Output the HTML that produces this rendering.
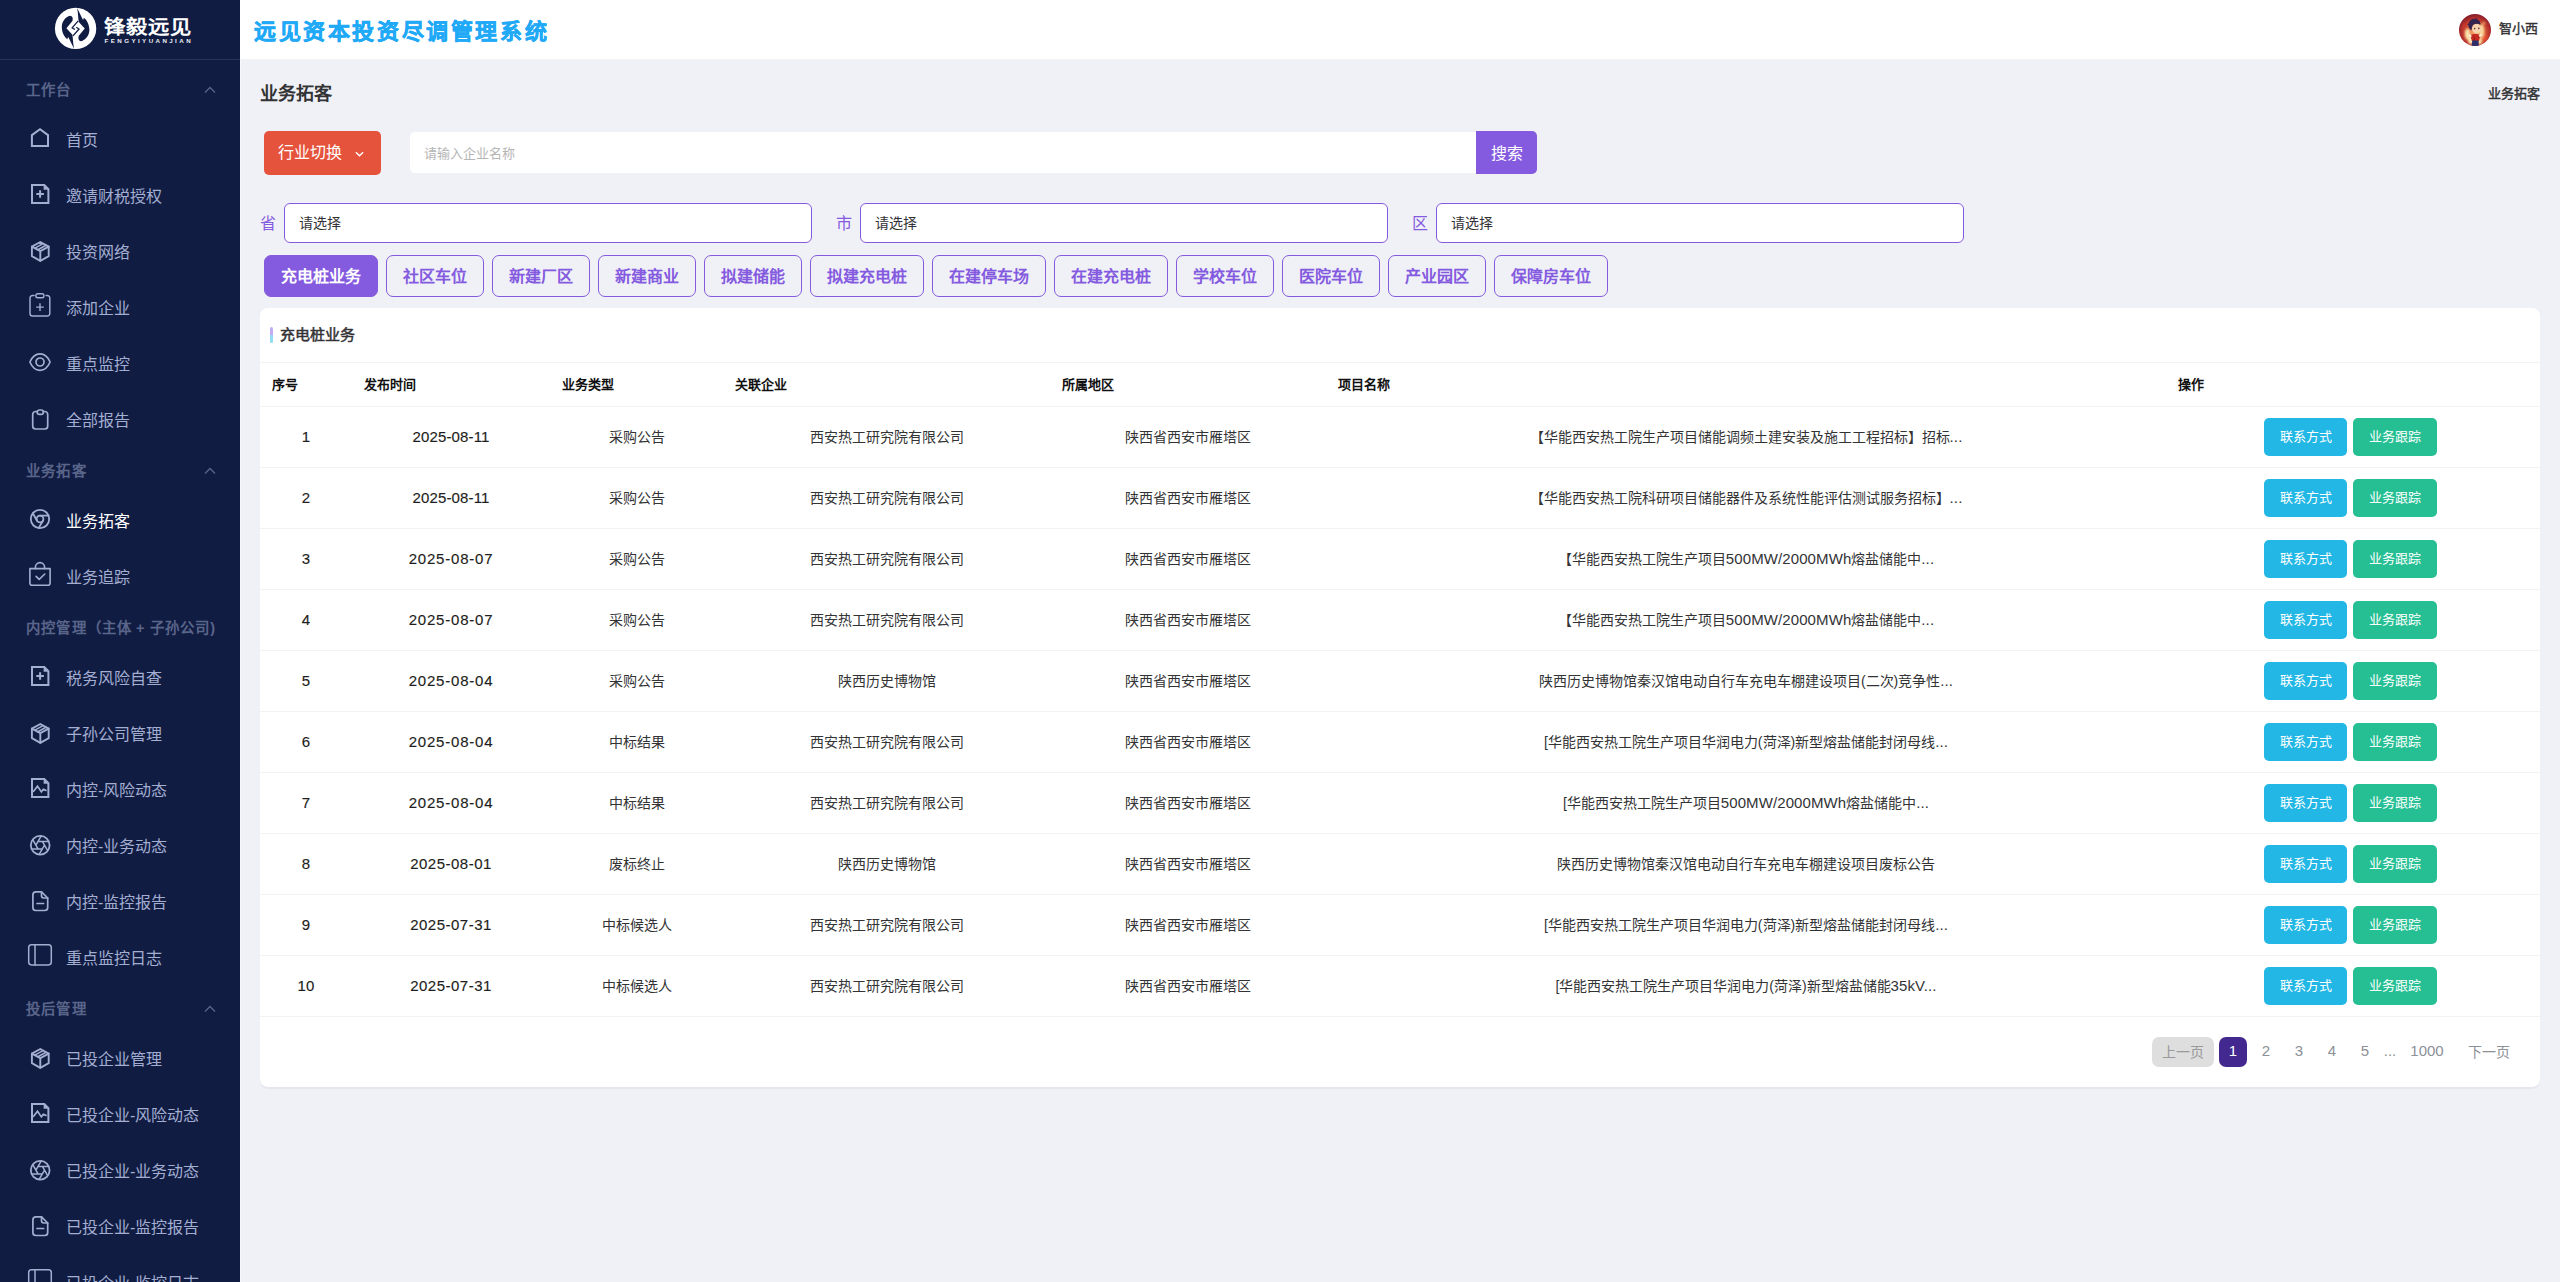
<!DOCTYPE html>
<html lang="zh-CN">
<head>
<meta charset="utf-8">
<title>业务拓客</title>
<style>

*{box-sizing:border-box;margin:0;padding:0}
html,body{width:2560px;height:1282px;overflow:hidden}
body{font-family:"Liberation Sans",sans-serif;background:#f0f1f7;color:#333335;font-size:14px;position:relative}
svg{display:block}

/* ---------- sidebar ---------- */
.sidebar{position:absolute;left:0;top:0;width:240px;height:1282px;background:#111c43;overflow:hidden}
.logo{height:60px;border-bottom:1px solid #293356;position:relative}
.logo svg{position:absolute;left:54px;top:7px}
.menu{padding-top:6px}
.cat{height:45px;padding:0 27px 0 26.4px;display:flex;align-items:center;justify-content:space-between;color:#5a658a;font-size:14.4px;font-weight:bold;letter-spacing:1.04px;word-spacing:-.6px;white-space:nowrap}
.cat .chev{color:#5a658a;margin-right:-3px;position:relative;top:1px}
.mi{height:56px;display:flex;align-items:center;padding-left:28px;color:#a3aed1;font-size:16px}
.mi svg{width:24px;height:24px;margin-right:14px;flex:none;position:relative;top:1px}
.mi.active{color:#fff}
.mi.active svg{color:#a3aed1}

/* ---------- header ---------- */
.topbar{position:absolute;left:240px;top:0;width:2320px;height:60px;background:#fff;border-bottom:1px solid #f3f3f3}
.sys{position:absolute;left:14px;top:17px;font-size:22px;line-height:30px;font-weight:bold;color:#1fa9f7;letter-spacing:2.6px;-webkit-text-stroke:.5px #1fa9f7}
.user{position:absolute;right:22px;top:14px;height:32px;display:flex;align-items:center;font-size:13px;font-weight:normal;-webkit-text-stroke:.4px #333335;color:#333335}
.user svg{margin-right:8px}
.user span{position:relative;top:-2.5px}

/* ---------- main ---------- */
.main{position:absolute;left:240px;top:60px;width:2320px;height:1222px}
.main:before{content:"";position:absolute;left:0;top:0;width:1px;height:1222px;background:#f8f8fc}
.ptitle{position:absolute;left:20px;top:22px;width:2280px;height:24px}
.ptitle h1{font-size:18px;line-height:24px;font-weight:bold;color:#333335}
.crumb{position:absolute;right:0;top:3px;font-size:13px;line-height:18px;font-weight:normal;-webkit-text-stroke:.45px #333335;color:#333335}

.srow{position:absolute;left:24px;top:71px;height:44px}
.btn-red{position:absolute;left:0;top:0;width:117px;height:44px;border-radius:5px;background:#e6533c;color:#fff;font-size:16px;display:flex;align-items:center;padding:0 0 4px 14px}
.btn-red svg{margin-left:13px;margin-top:6px}
.sinput{position:absolute;left:146px;top:1px;width:1066px;height:41px;background:#fff;border-radius:5px 0 0 5px;color:#b5b5b5;font-size:13px;line-height:43px;padding-left:14px}
.sbtn{position:absolute;left:1212px;top:0;width:61px;height:43px;background:#845adf;border-radius:0 5px 5px 0;color:#fff;font-size:16px;line-height:45px;text-align:center}

.frow{position:absolute;left:20px;top:143px;height:40px;width:1800px}
.frow label{position:absolute;top:1px;line-height:40px;font-size:16px;color:#845adf}
.frow .sel{position:absolute;top:0;width:528px;height:40px;border:1px solid #845adf;border-radius:6px;background:#fff;font-size:14px;line-height:38px;padding-left:14px;color:#333335}
.l0{left:0}.s0{left:24px}
.l1{left:576px}.s1{left:600px}
.l2{left:1152px}.s2{left:1176px}

.tabs{position:absolute;left:24px;top:195px;height:42px;display:flex}
.tab{height:42px;border:1px solid #845adf;border-radius:7px;color:#845adf;font-size:16px;font-weight:bold;line-height:42px;padding:0 16px;margin-right:8px;white-space:nowrap}
.tab.on{background:#845adf;color:#fff}

.card{position:absolute;left:20px;top:248px;width:2280px;height:779px;background:#fff;border-radius:8px;box-shadow:0 2px 0 rgba(10,10,10,.04)}
.chead{height:55px;border-bottom:1px solid #f3f3f3;padding:0 20px;display:flex;align-items:center}
.ctitle{position:relative;font-size:15px;font-weight:normal;-webkit-text-stroke:.5px #333335;color:#333335;line-height:20px}
.ctitle:before{content:"";position:absolute;left:-10px;top:2px;width:3px;height:16px;border-radius:4px;background:linear-gradient(to bottom,rgba(132,90,223,.5) 50%,rgba(35,183,229,.5) 50%)}

table{border-collapse:collapse;table-layout:fixed;width:2280px}
th{height:43px;text-align:left;padding-left:12px;font-size:13px;font-weight:bold;color:#111;border-bottom:1px solid #f3f3f3;padding-bottom:1px}
td{height:61px;text-align:center;font-size:14px;color:#333335;border-bottom:1px solid #f3f3f3;white-space:nowrap;padding-bottom:2px}
td.dt{padding-bottom:0}
.b1,.b2{position:relative;top:1px;display:inline-block;height:38px;line-height:38px;border-radius:5px;color:#fff;font-size:13px;text-align:center;vertical-align:middle}
.b1{width:83px;background:#23b7e5;margin-right:6px}
.b2{width:84px;background:#26bf94}
td:last-child{padding-right:5px}
.en{font-size:15px;letter-spacing:.1px}
.dt{font-size:15px;color:#1e1e20;letter-spacing:.15px;-webkit-text-stroke:.15px #1e1e20}

.pager{position:absolute;left:0;top:729px;width:2280px;height:30px;font-size:14px;color:#8c9097}
.pp{position:absolute;top:0;height:30px;line-height:30px;text-align:center}
.prev{left:1892px;width:62px;background:#dedede;border-radius:7px;color:#999}
.cur{left:1959px;width:28px;background:#42288f;border-radius:7px;color:#fff}
.cur,.n2,.n3,.n4,.n5,.n1000,.dots{line-height:28px;font-size:15px}
.n2{left:1992px;width:28px}.n3{left:2025px;width:28px}.n4{left:2058px;width:28px}.n5{left:2091px;width:28px}
.dots{left:2120px;width:20px}
.n1000{left:2144px;width:46px}
.next{left:2200px;width:58px}
</style>
</head>
<body>
<aside class="sidebar">
<div class="logo"><svg width="140" height="46" viewBox="54 7 140 46"><g transform="translate(52 5) scale(.03745)"><ellipse cx="630" cy="625" rx="552" ry="553" fill="#fff"/><g fill="#111c43"><path d="M480 285 C545 290 570 350 545 430 L385 620 L545 795 C562 900 560 1010 588 1168 L445 875 L428 852 L410 912 C325 850 265 730 262 600 C255 430 380 300 480 285 Z"/><path d="M700 425 L538 608 L612 655" fill="none" stroke="#111c43" stroke-width="34"/></g><g fill="#111c43" transform="rotate(180 630 625)"><path d="M480 285 C545 290 570 350 545 430 L385 620 L545 795 C562 900 560 1010 588 1168 L445 875 L428 852 L410 912 C325 850 265 730 262 600 C255 430 380 300 480 285 Z"/><path d="M700 425 L538 608 L612 655" fill="none" stroke="#111c43" stroke-width="34"/></g></g><text x="104.4" y="34.1" font-family="Liberation Sans, sans-serif" font-size="19.6" font-weight="bold" fill="#fff" textLength="87" lengthAdjust="spacingAndGlyphs">锋毅远见</text><text x="104.6" y="42.7" font-family="Liberation Sans, sans-serif" font-size="6.2" font-weight="bold" fill="#eceef4" textLength="86" lengthAdjust="spacing">FENGYIYUANJIAN</text></svg></div>
<nav class="menu">
<div class="cat"><span>工作台</span><svg class="chev" viewBox="0 0 12 8" width="12" height="8"><path d="M1 6.5 L6 1.5 L11 6.5" fill="none" stroke="currentColor" stroke-width="1.3"/></svg></div>
<div class="mi"><svg viewBox="0 0 24 24" fill="none" stroke="currentColor" stroke-width="2" stroke-linejoin="round" stroke-linecap="round" overflow="visible"><path d="M3.9 7.1 L12 1.3 L20 7.1 V18.1 H3.9 Z" stroke-linejoin="miter"/></svg><span>首页</span></div>
<div class="mi"><svg viewBox="0 0 24 24" fill="none" stroke="currentColor" stroke-width="2" stroke-linejoin="round" stroke-linecap="round" overflow="visible"><path d="M4 1 H16.3 L20.4 5.1 V19.1 H4 Z" stroke-linejoin="miter"/><path d="M15.6 1 V5.8 H20.4 Z" fill="currentColor" stroke="none"/><path d="M12.1 6.2 V13.8 M8.3 10 H15.9" stroke-linecap="butt"/></svg><span>邀请财税授权</span></div>
<div class="mi"><svg viewBox="0 0 24 24" fill="none" stroke="currentColor" stroke-width="1.9" stroke-linejoin="round" stroke-linecap="round" overflow="visible"><path d="M12.3 2 L20.7 6.6 V16.2 L12.3 20.8 L3.9 16.2 V6.6 Z"/><path d="M3.9 6.6 L12.3 11.2 L20.7 6.6 M12.3 11.2 V20.8"/><path d="M6.9 8.1 L15 3.6 M9.9 9.8 L18 5.3" stroke-width="1.6"/></svg><span>投资网络</span></div>
<div class="mi"><svg viewBox="0 0 24 24" fill="none" stroke="currentColor" stroke-width="1.45" stroke-linejoin="round" stroke-linecap="round" overflow="visible"><path d="M6.1 -.5 H4.5 A2.5 2.5 0 0 0 2 2 V17.5 A2.5 2.5 0 0 0 4.5 20 H19.3 A2.5 2.5 0 0 0 21.8 17.5 V2 A2.5 2.5 0 0 0 19.3 -.5 H18.1"/><rect x="7.9" y="-2.2" width="8" height="3.9" rx="1.8"/><path d="M12 7.3 V14.9 M8.2 11.1 H15.8" stroke-width="1.35" stroke-linecap="butt"/></svg><span>添加企业</span></div>
<div class="mi"><svg viewBox="0 0 24 24" fill="none" stroke="currentColor" stroke-width="1.7" stroke-linejoin="round" stroke-linecap="round" overflow="visible"><path d="M1.9 10 C3.6 6 7.2 1.8 12 1.8 C16.8 1.8 20.4 6 22.1 10 C20.4 14 16.8 18.3 12 18.3 C7.2 18.3 3.6 14 1.9 10 Z"/><circle cx="12" cy="10" r="4"/></svg><span>重点监控</span></div>
<div class="mi"><svg viewBox="0 0 24 24" fill="none" stroke="currentColor" stroke-width="1.7" stroke-linejoin="round" stroke-linecap="round" overflow="visible"><path d="M9.4 3.5 H7.7 A3 3 0 0 0 4.7 6.5 V18 A3 3 0 0 0 7.7 21 H16.7 A3 3 0 0 0 19.7 18 V6.5 A3 3 0 0 0 16.7 3.5 H15.2"/><rect x="9.2" y="2" width="6.2" height="4.4" rx="2.2"/></svg><span>全部报告</span></div>
<div class="cat"><span>业务拓客</span><svg class="chev" viewBox="0 0 12 8" width="12" height="8"><path d="M1 6.5 L6 1.5 L11 6.5" fill="none" stroke="currentColor" stroke-width="1.3"/></svg></div>
<div class="mi active"><svg viewBox="0 0 24 24" fill="none" stroke="currentColor" stroke-width="1.8" stroke-linejoin="round" stroke-linecap="round" overflow="visible"><circle cx="12" cy="10" r="9.2"/><circle cx="12" cy="10" r="3.4"/><path d="M12 6.6 H20.5 M14.95 11.7 L10.6 19.1 M9.05 11.7 L4.8 4.3"/></svg><span>业务拓客</span></div>
<div class="mi"><svg viewBox="0 0 24 24" fill="none" stroke="currentColor" stroke-width="1.6" stroke-linejoin="round" stroke-linecap="round" overflow="visible"><path d="M1.9 3.6 H22.1 V18 A2.3 2.3 0 0 1 19.8 20.3 H4.2 A2.3 2.3 0 0 1 1.9 18 Z"/><path d="M7.4 3.6 V2.2 A4.6 4.6 0 0 1 16.6 2.2 V3.6"/><path d="M8.1 11.4 L11.2 14.4 L16.8 9"/></svg><span>业务追踪</span></div>
<div class="cat"><span>内控管理（主体 + 子孙公司)</span></div>
<div class="mi"><svg viewBox="0 0 24 24" fill="none" stroke="currentColor" stroke-width="2" stroke-linejoin="round" stroke-linecap="round" overflow="visible"><path d="M4 1 H16.3 L20.4 5.1 V19.1 H4 Z" stroke-linejoin="miter"/><path d="M15.6 1 V5.8 H20.4 Z" fill="currentColor" stroke="none"/><path d="M12.1 6.2 V13.8 M8.3 10 H15.9" stroke-linecap="butt"/></svg><span>税务风险自查</span></div>
<div class="mi"><svg viewBox="0 0 24 24" fill="none" stroke="currentColor" stroke-width="1.9" stroke-linejoin="round" stroke-linecap="round" overflow="visible"><path d="M12.3 2 L20.7 6.6 V16.2 L12.3 20.8 L3.9 16.2 V6.6 Z"/><path d="M3.9 6.6 L12.3 11.2 L20.7 6.6 M12.3 11.2 V20.8"/><path d="M6.9 8.1 L15 3.6 M9.9 9.8 L18 5.3" stroke-width="1.6"/></svg><span>子孙公司管理</span></div>
<div class="mi"><svg viewBox="0 0 24 24" fill="none" stroke="currentColor" stroke-width="2" stroke-linejoin="round" stroke-linecap="round" overflow="visible"><path d="M4 1 H16.3 L20.4 5.1 V19.1 H4 Z" stroke-linejoin="miter"/><path d="M15.6 1 V5.8 H20.4 Z" fill="currentColor" stroke="none"/><path d="M5.6 13.3 L9.5 8.3 L13.4 13.9 L15.3 11.3 L17.9 12.4" stroke-width="1.7" stroke-linejoin="miter"/></svg><span>内控-风险动态</span></div>
<div class="mi"><svg viewBox="0 0 24 24" fill="none" stroke="currentColor" stroke-width="1.8" stroke-linejoin="round" stroke-linecap="round" overflow="visible"><circle cx="12.2" cy="11.2" r="9.4"/><path d="M14.35 7.48 L19.69 16.72 M10.05 7.48 L20.73 7.48 M7.9 11.2 L13.24 1.96 M10.05 14.92 L4.71 5.68 M14.35 14.92 L3.67 14.92 M16.5 11.2 L11.16 20.44 " stroke-width="1.5"/></svg><span>内控-业务动态</span></div>
<div class="mi"><svg viewBox="0 0 24 24" fill="none" stroke="currentColor" stroke-width="1.7" stroke-linejoin="round" stroke-linecap="round" overflow="visible"><path d="M13.5 1.9 H7.9 A3 3 0 0 0 4.9 4.9 V17.5 A3 3 0 0 0 7.9 20.5 H16.7 A3 3 0 0 0 19.7 17.5 V8 Z"/><path d="M13.5 1.9 V5.8 A2.2 2.2 0 0 0 15.7 8 H19.7"/><path d="M9 13.5 H15.6"/></svg><span>内控-监控报告</span></div>
<div class="mi"><svg viewBox="0 0 24 24" fill="none" stroke="currentColor" stroke-width="1.5" stroke-linejoin="round" stroke-linecap="round" overflow="visible"><rect x=".7" y="-1.2" width="22.6" height="20.1" rx="2.8"/><path d="M7 -1.2 V18.9"/></svg><span>重点监控日志</span></div>
<div class="cat"><span>投后管理</span><svg class="chev" viewBox="0 0 12 8" width="12" height="8"><path d="M1 6.5 L6 1.5 L11 6.5" fill="none" stroke="currentColor" stroke-width="1.3"/></svg></div>
<div class="mi"><svg viewBox="0 0 24 24" fill="none" stroke="currentColor" stroke-width="1.9" stroke-linejoin="round" stroke-linecap="round" overflow="visible"><path d="M12.3 2 L20.7 6.6 V16.2 L12.3 20.8 L3.9 16.2 V6.6 Z"/><path d="M3.9 6.6 L12.3 11.2 L20.7 6.6 M12.3 11.2 V20.8"/><path d="M6.9 8.1 L15 3.6 M9.9 9.8 L18 5.3" stroke-width="1.6"/></svg><span>已投企业管理</span></div>
<div class="mi"><svg viewBox="0 0 24 24" fill="none" stroke="currentColor" stroke-width="2" stroke-linejoin="round" stroke-linecap="round" overflow="visible"><path d="M4 1 H16.3 L20.4 5.1 V19.1 H4 Z" stroke-linejoin="miter"/><path d="M15.6 1 V5.8 H20.4 Z" fill="currentColor" stroke="none"/><path d="M5.6 13.3 L9.5 8.3 L13.4 13.9 L15.3 11.3 L17.9 12.4" stroke-width="1.7" stroke-linejoin="miter"/></svg><span>已投企业-风险动态</span></div>
<div class="mi"><svg viewBox="0 0 24 24" fill="none" stroke="currentColor" stroke-width="1.8" stroke-linejoin="round" stroke-linecap="round" overflow="visible"><circle cx="12.2" cy="11.2" r="9.4"/><path d="M14.35 7.48 L19.69 16.72 M10.05 7.48 L20.73 7.48 M7.9 11.2 L13.24 1.96 M10.05 14.92 L4.71 5.68 M14.35 14.92 L3.67 14.92 M16.5 11.2 L11.16 20.44 " stroke-width="1.5"/></svg><span>已投企业-业务动态</span></div>
<div class="mi"><svg viewBox="0 0 24 24" fill="none" stroke="currentColor" stroke-width="1.7" stroke-linejoin="round" stroke-linecap="round" overflow="visible"><path d="M13.5 1.9 H7.9 A3 3 0 0 0 4.9 4.9 V17.5 A3 3 0 0 0 7.9 20.5 H16.7 A3 3 0 0 0 19.7 17.5 V8 Z"/><path d="M13.5 1.9 V5.8 A2.2 2.2 0 0 0 15.7 8 H19.7"/><path d="M9 13.5 H15.6"/></svg><span>已投企业-监控报告</span></div>
<div class="mi"><svg viewBox="0 0 24 24" fill="none" stroke="currentColor" stroke-width="1.5" stroke-linejoin="round" stroke-linecap="round" overflow="visible"><rect x=".7" y="-1.2" width="22.6" height="20.1" rx="2.8"/><path d="M7 -1.2 V18.9"/></svg><span>已投企业-监控日志</span></div>
</nav>
</aside>
<header class="topbar"><div class="sys">远见资本投资尽调管理系统</div><div class="user"><svg width="32" height="32" viewBox="0 0 32 32"><defs><radialGradient id="ag" cx="52%" cy="58%" r="56%"><stop offset="0" stop-color="#f4b77a"/><stop offset=".45" stop-color="#e0603a"/><stop offset=".78" stop-color="#b5302a"/><stop offset="1" stop-color="#8a1f2c"/></radialGradient><filter id="ab" x="-20%" y="-20%" width="140%" height="140%"><feGaussianBlur stdDeviation="1.1"/></filter><clipPath id="ac"><circle cx="16" cy="16" r="16"/></clipPath></defs><g clip-path="url(#ac)"><rect width="32" height="32" fill="url(#ag)"/><g filter="url(#ab)"><ellipse cx="8.5" cy="20" rx="2.6" ry="5.5" fill="#fbe2a8"/><ellipse cx="22.5" cy="17" rx="2.8" ry="7" fill="#f9d69a"/><ellipse cx="12" cy="26" rx="3" ry="4" fill="#fde9b8"/><ellipse cx="20.5" cy="27" rx="2.6" ry="3.5" fill="#fbdc9f"/><ellipse cx="26" cy="24" rx="2" ry="3.5" fill="#e8502e"/><ellipse cx="5.5" cy="13" rx="2" ry="4" fill="#c7382a"/><ellipse cx="25" cy="9" rx="1.2" ry="1.2" fill="#f6c77e"/></g><ellipse cx="17.6" cy="14.6" rx="4.6" ry="4.9" fill="#f4d3ad"/><path d="M8.2 10.6 L9.6 9.4 C10.4 6 14 4.2 16.6 5 L17.6 3.8 L18.2 5.4 C20.6 6 21.8 8.4 21.4 10.8 C19.4 9.4 16.6 9.6 14.4 10.4 C13 11.6 12.8 14.2 12.6 16.2 C10.6 15.4 9.2 13.2 9.4 11.2 Z" fill="#35244f"/><circle cx="15.6" cy="14.6" r=".8" fill="#6d2c3c"/><circle cx="19.8" cy="14.4" r=".8" fill="#6d2c3c"/><path d="M11.4 21.6 C12.6 19.4 20.2 19.4 21.2 21.6 L20 27 H12.8 Z" fill="#c42a20"/><path d="M14.6 20.4 L16.2 27 L15 27 Z" fill="#8e1519"/><path d="M13.2 26.6 H19.6 L19.8 32 H12.8 Z" fill="#2c2f6a"/><path d="M9.8 20.8 L12.4 22.6 M22.4 20.4 L20.2 22.4" stroke="#fff4de" stroke-width="1.7"/></g></svg><span>智小西</span></div></header>
<main class="main">
<div class="ptitle"><h1>业务拓客</h1><div class="crumb">业务拓客</div></div>
<div class="srow"><div class="btn-red"><span>行业切换</span><svg viewBox="0 0 10 6" width="9" height="6"><path d="M1 1 L5 5 L9 1" fill="none" stroke="#fff" stroke-width="1.6"/></svg></div><div class="sinput">请输入企业名称</div><div class="sbtn">搜索</div></div>
<div class="frow"><label class="l0">省</label><div class="sel s0">请选择</div><label class="l1">市</label><div class="sel s1">请选择</div><label class="l2">区</label><div class="sel s2">请选择</div></div>
<div class="tabs"><div class="tab on">充电桩业务</div><div class="tab">社区车位</div><div class="tab">新建厂区</div><div class="tab">新建商业</div><div class="tab">拟建储能</div><div class="tab">拟建充电桩</div><div class="tab">在建停车场</div><div class="tab">在建充电桩</div><div class="tab">学校车位</div><div class="tab">医院车位</div><div class="tab">产业园区</div><div class="tab">保障房车位</div></div>
<section class="card">
<div class="chead"><span class="ctitle">充电桩业务</span></div>
<table>
<colgroup><col style="width:92px"><col style="width:198px"><col style="width:173px"><col style="width:327px"><col style="width:276px"><col style="width:840px"><col style="width:374px"></colgroup>
<thead><tr><th>序号</th><th>发布时间</th><th>业务类型</th><th>关联企业</th><th>所属地区</th><th>项目名称</th><th>操作</th></tr></thead>
<tbody>
<tr><td class="dt">1</td><td class="dt" style="letter-spacing:0.15px">2025-08-11</td><td>采购公告</td><td>西安热工研究院有限公司</td><td>陕西省西安市雁塔区</td><td>【华能西安热工院生产项目储能调频土建安装及施工工程招标】招标<span class="en">...</span></td><td><span class="b1">联系方式</span><span class="b2">业务跟踪</span></td></tr>
<tr><td class="dt">2</td><td class="dt" style="letter-spacing:0.15px">2025-08-11</td><td>采购公告</td><td>西安热工研究院有限公司</td><td>陕西省西安市雁塔区</td><td>【华能西安热工院科研项目储能器件及系统性能评估测试服务招标】<span class="en">...</span></td><td><span class="b1">联系方式</span><span class="b2">业务跟踪</span></td></tr>
<tr><td class="dt">3</td><td class="dt" style="letter-spacing:0.8px">2025-08-07</td><td>采购公告</td><td>西安热工研究院有限公司</td><td>陕西省西安市雁塔区</td><td>【华能西安热工院生产项目<span class="en">500MW/2000MWh</span>熔盐储能中<span class="en">...</span></td><td><span class="b1">联系方式</span><span class="b2">业务跟踪</span></td></tr>
<tr><td class="dt">4</td><td class="dt" style="letter-spacing:0.8px">2025-08-07</td><td>采购公告</td><td>西安热工研究院有限公司</td><td>陕西省西安市雁塔区</td><td>【华能西安热工院生产项目<span class="en">500MW/2000MWh</span>熔盐储能中<span class="en">...</span></td><td><span class="b1">联系方式</span><span class="b2">业务跟踪</span></td></tr>
<tr><td class="dt">5</td><td class="dt" style="letter-spacing:0.8px">2025-08-04</td><td>采购公告</td><td>陕西历史博物馆</td><td>陕西省西安市雁塔区</td><td>陕西历史博物馆秦汉馆电动自行车充电车棚建设项目(二次)竞争性<span class="en">...</span></td><td><span class="b1">联系方式</span><span class="b2">业务跟踪</span></td></tr>
<tr><td class="dt">6</td><td class="dt" style="letter-spacing:0.8px">2025-08-04</td><td>中标结果</td><td>西安热工研究院有限公司</td><td>陕西省西安市雁塔区</td><td>[华能西安热工院生产项目华润电力(菏泽)新型熔盐储能封闭母线<span class="en">...</span></td><td><span class="b1">联系方式</span><span class="b2">业务跟踪</span></td></tr>
<tr><td class="dt">7</td><td class="dt" style="letter-spacing:0.8px">2025-08-04</td><td>中标结果</td><td>西安热工研究院有限公司</td><td>陕西省西安市雁塔区</td><td>[华能西安热工院生产项目<span class="en">500MW/2000MWh</span>熔盐储能中<span class="en">...</span></td><td><span class="b1">联系方式</span><span class="b2">业务跟踪</span></td></tr>
<tr><td class="dt">8</td><td class="dt" style="letter-spacing:0.5px">2025-08-01</td><td>废标终止</td><td>陕西历史博物馆</td><td>陕西省西安市雁塔区</td><td>陕西历史博物馆秦汉馆电动自行车充电车棚建设项目废标公告</td><td><span class="b1">联系方式</span><span class="b2">业务跟踪</span></td></tr>
<tr><td class="dt">9</td><td class="dt" style="letter-spacing:0.5px">2025-07-31</td><td>中标候选人</td><td>西安热工研究院有限公司</td><td>陕西省西安市雁塔区</td><td>[华能西安热工院生产项目华润电力(菏泽)新型熔盐储能封闭母线<span class="en">...</span></td><td><span class="b1">联系方式</span><span class="b2">业务跟踪</span></td></tr>
<tr><td class="dt">10</td><td class="dt" style="letter-spacing:0.5px">2025-07-31</td><td>中标候选人</td><td>西安热工研究院有限公司</td><td>陕西省西安市雁塔区</td><td>[华能西安热工院生产项目华润电力(菏泽)新型熔盐储能<span class="en">35kV...</span></td><td><span class="b1">联系方式</span><span class="b2">业务跟踪</span></td></tr>
</tbody>
</table>
<div class="pager"><span class="pp prev">上一页</span><span class="pp cur">1</span><span class="pp n2">2</span><span class="pp n3">3</span><span class="pp n4">4</span><span class="pp n5">5</span><span class="pp dots">...</span><span class="pp n1000">1000</span><span class="pp next">下一页</span></div>
</section>
</main>
</body>
</html>
